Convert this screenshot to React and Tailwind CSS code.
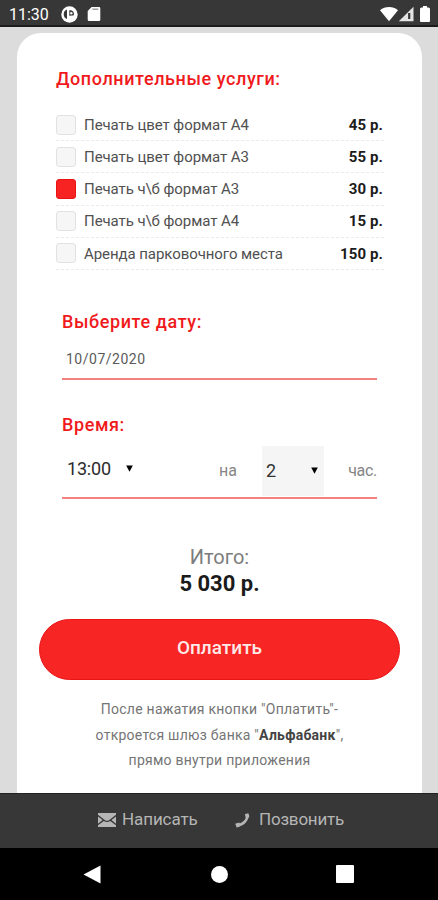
import { useState } from "react";

const SERVICES = [
  { id: 1, name: "Печать цвет формат А4", price: "45 р." },
  { id: 2, name: "Печать цвет формат А3", price: "55 р." },
  { id: 3, name: "Печать ч\\б формат А3", price: "30 р." },
  { id: 4, name: "Печать ч\\б формат А4", price: "15 р." },
  { id: 5, name: "Аренда парковочного места", price: "150 р." },
];

// android status bar
function StatusBar() {
  return (
    <div className="flex h-[27px] shrink-0 items-center border-b-2 border-[#1c1c1c] bg-[#373737] pt-[3px] pl-[9px] pr-[8px] text-white">
      <span className="w-10 pt-0.5 text-base leading-none whitespace-nowrap">11:30</span>
      <svg className="ml-3" width="17" height="17" viewBox="0 0 17 17">
        <circle cx="8.5" cy="8.5" r="8.2" fill="#fff" />
        <path d="M6 3.600v9.400a5 5 0 0 1 0-9.400z" fill="#373737" />
        <path d="M8.300 9.800V4.300a4.200 4.200 0 0 1 4.700 3.600c0 1-.7 1.700-1.500 1.700z" fill="#373737" />
        <circle cx="10.300" cy="7.300" r="1.200" fill="#fff" />
      </svg>
      <svg className="ml-[9px]" width="14" height="16" viewBox="0 0 14 16">
        <path d="M4.6 1H12a1.3 1.3 0 0 1 1.3 1.3v11.4A1.3 1.3 0 0 1 12 15H2a1.3 1.3 0 0 1-1.3-1.3V5z" fill="#fff" />
        <path d="M5.300 3.200h6" stroke="#999" strokeWidth="1.400" />
      </svg>
      <div className="ml-auto flex items-center">
        <svg width="18" height="16" viewBox="0 0 18 16">
          <path d="M0 4.2C5-.2 13-.2 18 4.2L9 15.2z" fill="#fff" />
        </svg>
        <svg width="17" height="16" viewBox="0 0 17 16">
          <path d="M15.5.8v14.4H.8z" fill="#e4e4e4" />
          <path d="M11.200 7v6" stroke="#373737" strokeWidth="2.2" />
        </svg>
        <svg className="ml-[5px]" width="10" height="16" viewBox="0 0 10 16">
          <path d="M3 0h4v1.500h1.500a1.500 1.500 0 0 1 1.500 1.500V15a1 1 0 0 1-1 1H1a1 1 0 0 1-1-1V3a1.500 1.500 0 0 1 1.500-1.500H3z" fill="#fff" />
        </svg>
      </div>
    </div>
  );
}

function Arrow() {
  return (
    <svg width="7" height="7" viewBox="0 0 7 7">
      <path d="M.2.5h6.6L3.5 6.7z" fill="#000" />
    </svg>
  );
}

export default function App() {
  const [checked, setChecked] = useState([3]);

  const toggle = (id) => {
    setChecked((prev) =>
      prev.includes(id) ? prev.filter((x) => x !== id) : [...prev, id]
    );
  };

  return (
    <div className="flex h-[900px] w-[438px] flex-col overflow-hidden bg-[#dcdcdc] font-['Roboto',sans-serif]">
      <StatusBar />

      {/* Order card */}
      <main className="min-h-0 flex-1 overflow-hidden pt-[6px] pr-4 pl-[17px]">
        <div className="h-[800px] rounded-t-[24px] bg-white pt-[34px]">
          <h2 className="ml-[39px] text-[18px] leading-6 font-medium tracking-[0.59px] whitespace-nowrap text-[#f01a1c]">
            Дополнительные услуги:
          </h2>

          <ul className="mt-[18px] mr-[38px] ml-[39px]">
            {SERVICES.map((s) => (
              <li
                key={s.id}
                onClick={() => toggle(s.id)}
                className="flex h-[32.2px] items-center border-b border-dashed border-[#ebebeb]"
              >
                <span
                  className={`size-5 rounded-[3px] border ${
                    checked.includes(s.id)
                      ? "border-[#ea1316] bg-[#f72323]"
                      : "border-[#e2e2e2] bg-[#f6f6f6]"
                  }`}
                />
                <span className="ml-2 pt-px text-[15px] tracking-[-0.07px] whitespace-nowrap text-[#505050]">{s.name}</span>
                <span className="ml-auto pt-px pr-px text-[15px] font-bold tracking-[0.1px] whitespace-nowrap text-[#1c1c1c]">{s.price}</span>
              </li>
            ))}
          </ul>

          {/* Date */}
          <section className="mt-[40px] mr-[45px] ml-[45px]">
            <h2 className="text-[18px] leading-6 font-medium tracking-[0.6px] text-[#f01a1c]">Выберите дату:</h2>
            <div className="flex h-[46px] items-center border-b-2 border-[#f58080] pt-[7px] pl-1 text-[14px] tracking-[0.5px] text-[#5a5a5a]">
              10/07/2020
            </div>
          </section>

          {/* Time */}
          <section className="mt-[33px] mr-[45px] ml-[45px]">
            <h2 className="text-[18px] leading-6 font-medium tracking-[0.6px] text-[#f01a1c]">Время:</h2>
            <div className="flex h-[62px] items-start border-b-2 border-[#f58080] pt-[9px]">
              <div className="flex h-[46px] w-[157px] items-center pl-[5px] text-[18px] text-[#2b2b2b]">
                <span className="w-[59px] tracking-[-0.2px]">13:00</span>
                <Arrow />
              </div>
              <span className="flex h-[51px] w-[43px] items-center text-[16px] text-[#858585]">на</span>
              <div className="flex h-[50px] w-[62px] items-center justify-between bg-[#f5f5f5] pr-1.5 pl-1 text-[18px] text-[#333]">
                <span>2</span>
                <Arrow />
              </div>
              <span className="ml-auto flex h-[51px] items-center text-[16px] tracking-[-0.3px] text-[#858585]">час.</span>
            </div>
          </section>

          {/* Total */}
          <div className="mt-[45px] text-center">
            <div className="text-[20px] leading-[26px] text-[#7d7d7d]">Итого:</div>
            <div className="text-[22px] leading-7 font-bold text-[#1a1a1a]">5 030 р.</div>
          </div>

          <button className="mt-[21px] ml-[22px] block h-[61px] w-[361px] rounded-full border border-[#ea1316] bg-[#f72523] pb-0.5 text-[19px] font-medium text-[#ffe9e9]">
            Оплатить
          </button>

          <p className="mt-[17px] text-center text-[14px] leading-[25.7px] tracking-[0.25px] text-[#757575]">
            После нажатия кнопки "Оплатить"-
            <br />
            откроется шлюз банка "<b className="font-bold text-[#444]">Альфабанк</b>",
            <br />
            прямо внутри приложения
          </p>
        </div>
      </main>

      {/* Contacts */}
      <div className="flex h-[55px] shrink-0 items-center border-t border-[#222] bg-[#373737] pb-0.5 pl-[98px] text-[17px] text-[#b5b5b5]">
        <svg width="18" height="14" viewBox="0 0 18 14">
          <path d="M0 0h18v1.800L11 7.200q-2 1.300-4 0L0 1.800z" fill="#b5b5b5" />
          <path d="M0 3.600l4.600 3.500L0 10.800zM18 3.600l-4.600 3.500 4.600 3.700z" fill="#b5b5b5" />
          <path d="M0 12.200l5.800-4.300q3.200 2.100 6.400 0l5.800 4.300V14H0z" fill="#b5b5b5" />
        </svg>
        <span className="ml-[6px] w-[113px] tracking-[-0.1px]">Написать</span>
        <svg width="15" height="15" viewBox="0 0 15 15">
          <path d="M12.200 2.500c.5 4.500-4.500 9.700-9.700 9.500" fill="none" stroke="#b5b5b5" strokeWidth="2.600" />
          <path d="M9.800 1.200 13.200.2q1.600 2 1 4.300l-3.200.6zM.2 10.800l4-1.400 1.500 3.300q-2 1.800-4 1.700z" fill="#b5b5b5" />
        </svg>
        <span className="ml-[9px] tracking-[-0.2px]">Позвонить</span>
      </div>

      {/* Android navigation */}
      <nav className="flex h-[52px] shrink-0 items-center bg-black pl-[83px]">
        <svg width="18" height="19" viewBox="0 0 18 19">
          <path d="M17.500.5v18L.5 9.500z" fill="#fff" />
        </svg>
        <span className="ml-[110px] size-[17px] rounded-full bg-white" />
        <span className="ml-[108px] size-[18px] rounded-[1px] bg-white" />
      </nav>
    </div>
  );
}
